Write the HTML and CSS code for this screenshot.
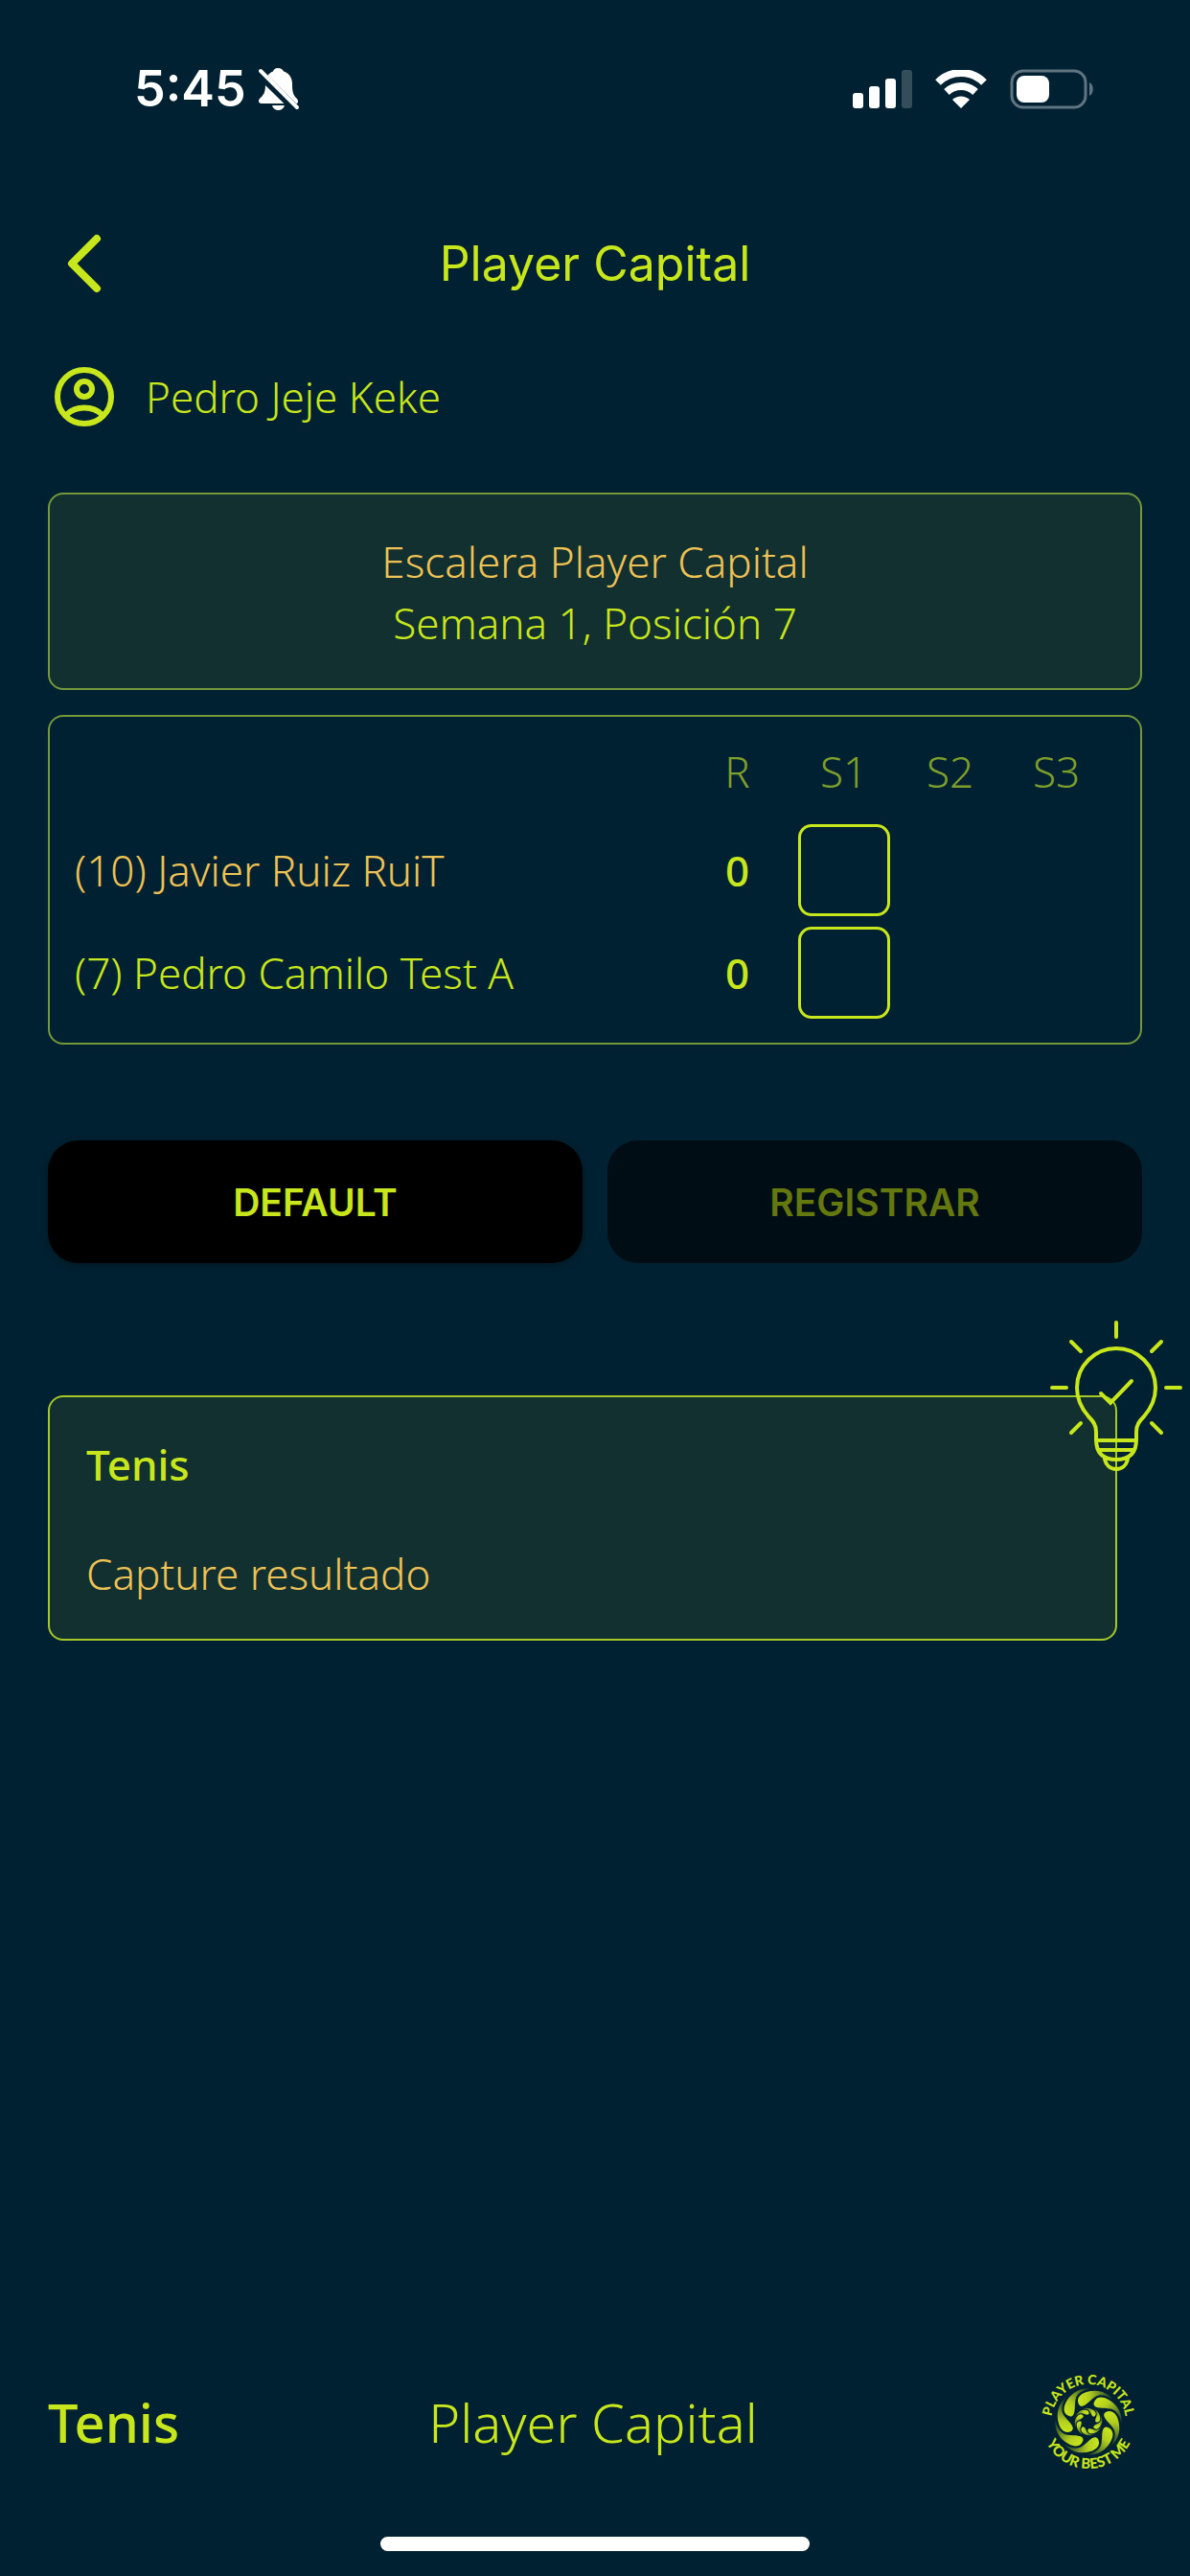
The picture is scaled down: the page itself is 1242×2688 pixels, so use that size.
FILE: index.html
```html
<!DOCTYPE html>
<html lang="es">
<head>
    <meta charset="UTF-8">
    <meta name="viewport" content="width=device-width, initial-scale=1.0">
    <title>Player Capital - Capture resultado</title>
    <link rel="stylesheet" href="styles.css">
</head>
<body>
    <div class="status-bar">
        <div class="status-time">
            <span>5:45</span>
            <svg width="44" height="46" viewBox="0 0 44 46" fill="#fff">
                <path d="M21 1c3 0 5 1.500 6 3.500 6 2 9 6.500 9 13.500 0 10 2 12 5 15 2 3 1 5-1 5H4c-3 0-4-3-2-5 4-4 6-6 6-15 0-7 3-11.500 8-13.500C16.500 2.500 18.500 1 21 1z"/>
                <path d="M15 40h13c-1 3.500-3.500 5-6.500 5S16 43.500 15 40z"/>
                <path d="M-1 4l42 41" stroke="#002131" stroke-width="9"/>
                <path d="M3 4l38 38" stroke="#fff" stroke-width="4" stroke-linecap="round"/>
            </svg>
        </div>
        <div class="status-icons">
            <svg width="62" height="40" viewBox="0 0 62 40" fill="#fff">
                <rect x="0" y="24" width="11" height="16" rx="3"/>
                <rect x="17" y="17" width="11" height="23" rx="3"/>
                <rect x="34" y="9" width="11" height="31" rx="3"/>
                <rect x="51" y="0" width="11" height="40" rx="3" opacity=".2"/>
            </svg>
            <svg width="54" height="40" viewBox="0 0 54 40" fill="none" stroke="#fff">
                <path d="M3 13a34 34 0 0 1 48 0" stroke-width="8"/>
                <path d="M12 23a22 22 0 0 1 30 0" stroke-width="8"/>
                <path d="M18 31a13 13 0 0 1 18 0l-9 9z" fill="#fff" stroke="none"/>
            </svg>
            <svg width="88" height="42" viewBox="0 0 88 42">
                <rect x="2" y="2" width="77" height="38" rx="12" fill="none" stroke="#5f7480" stroke-width="3"/>
                <rect x="7" y="7" width="34" height="28" rx="8" fill="#fff"/>
                <path d="M83 14c5 2 5 12 0 14z" fill="#5f7480"/>
            </svg>
        </div>
    </div>

    <header class="header">
        <button class="back" type="button" aria-label="Volver">
            <svg width="36" height="62" viewBox="0 0 36 62" fill="none" stroke="#c8e61c" stroke-width="8" stroke-linecap="round" stroke-linejoin="round">
                <path d="M31 5L5 31l26 26"/>
            </svg>
        </button>
        <h1>Player Capital</h1>
    </header>

    <main class="content">
        <div class="user">
            <svg width="64" height="64" viewBox="0 0 64 64" fill="none" stroke="#c8e61c" stroke-width="6">
                <circle cx="32" cy="32" r="28"/>
                <circle cx="32" cy="24" r="8"/>
                <path d="M13 51c10-10 28-10 38 0"/>
            </svg>
            <span>Pedro Jeje Keke</span>
        </div>

        <section class="card match">
            <p class="orange">Escalera Player Capital</p>
            <p>Semana 1, Posición 7</p>
        </section>

        <section class="card score">
            <table>
                <thead>
                    <tr>
                        <td></td>
                        <th>R</th>
                        <th>S1</th>
                        <th>S2</th>
                        <th>S3</th>
                    </tr>
                </thead>
                <tbody>
                    <tr>
                        <td class="name orange"><label for="set1-a">(10) Javier Ruiz RuiT</label></td>
                        <td class="result">0</td>
                        <td><input id="set1-a" type="text" inputmode="numeric"></td>
                        <td></td>
                        <td></td>
                    </tr>
                    <tr>
                        <td class="name"><label for="set1-b">(7) Pedro Camilo Test A</label></td>
                        <td class="result">0</td>
                        <td><input id="set1-b" type="text" inputmode="numeric"></td>
                        <td></td>
                        <td></td>
                    </tr>
                </tbody>
            </table>
        </section>

        <div class="actions">
            <button type="button">DEFAULT</button>
            <button type="button" disabled>REGISTRAR</button>
        </div>

        <section class="card tip">
            <h2>Tenis</h2>
            <p class="orange">Capture resultado</p>
            <svg class="bulb" width="138" height="158" viewBox="0 0 138 158" fill="none" stroke="#c8e61c" stroke-width="4" stroke-linecap="round">
                <!-- rays -->
                <path d="M69 2v15M22 22l10 10M116 22l-10 10M2 70h15M121 70h15M22 117l10-10M116 117l-10-10"/>
                <!-- glass -->
                <path d="M48 124v-8c0-7-3-11-8-16-7-8-12-18-12-30a41 41 0 0 1 82 0c0 12-5 22-12 30-5 5-8 9-8 16v8"/>
                <!-- base -->
                <path d="M48 125h42M48 124c0 15 8 21 21 21s21-6 21-21M51 135h36M57 144c1 7 6 11 12 11s11-4 12-11"/>
                <path d="M53 76l10 10 22-23"/>
            </svg>
        </section>
    </main>

    <footer class="footer">
        <strong>Tenis</strong>
        <span>Player Capital</span>
        <svg class="logo" width="104" height="104" viewBox="-52 -52 104 104">
            <defs>
                <linearGradient id="fade" x1="0" y1="0" x2="1" y2="0">
                    <stop offset="0" stop-color="#c8e61c"/>
                    <stop offset=".3" stop-color="#b4d01e"/>
                    <stop offset="1" stop-color="#c8e61c" stop-opacity="0"/>
                </linearGradient>
                <path id="drop" fill="url(#fade)" d="M-10-18c-3-6 1-11 8-13C8-34 19-32 27-22c-8-6-15-7-20-4-6 4-13 14-17 8z"/>
                <g id="swirl">
                    <use href="#drop"/>
                    <use href="#drop" transform="rotate(45)"/>
                    <use href="#drop" transform="rotate(90)"/>
                    <use href="#drop" transform="rotate(135)"/>
                    <use href="#drop" transform="rotate(180)"/>
                    <use href="#drop" transform="rotate(225)"/>
                    <use href="#drop" transform="rotate(270)"/>
                    <use href="#drop" transform="rotate(315)"/>
                </g>
                <path id="arc-top" d="M-39 0a39 39 0 0 1 78 0"/>
                <path id="arc-bottom" d="M-49 0a49 49 0 0 0 98 0"/>
            </defs>
            <use href="#swirl"/>
            <use href="#swirl" transform="rotate(20) scale(-.42 .42)"/>
            <text><textPath href="#arc-top" startOffset="50%">PLAYER CAPITAL</textPath></text>
            <text class="motto"><textPath href="#arc-bottom" startOffset="50%">YOUR BEST ME</textPath></text>
        </svg>
    </footer>
    <div class="home-indicator"></div>
</body>
</html>
```
FILE: styles.css
```css
* {
    box-sizing: border-box;
}
body {
    margin: 0;
    min-height: 100vh;
    display: flex;
    flex-direction: column;
    background: #002131;
    color: #c8e61c;
    font-family: "Noto Sans", "Open Sans", sans-serif;
    font-size: 44px;
    font-weight: 300;
    line-height: 64px;
}
h1, h2, p {
    margin: 0;
}
svg {
    display: block;
    flex: none;
}
.orange {
    color: #eec254;
}
.status-bar {
    display: flex;
    justify-content: space-between;
    align-items: center;
    height: 186px;
    padding: 0 100px 0 140px;
    color: #fff;
    font-family: Inter, sans-serif;
    font-size: 52px;
    font-weight: 600;
}
.status-time {
    display: flex;
    align-items: center;
    gap: 12px;
}
.status-icons {
    display: flex;
    align-items: center;
    gap: 24px;
}
.header {
    display: grid;
    grid-template-columns: 1fr auto 1fr;
    align-items: center;
    height: 178px;
    padding: 0 50px;
}
.header h1 {
    font-family: Inter, sans-serif;
    font-size: 50px;
    font-weight: 400;
}
.back {
    justify-self: start;
    padding: 20px;
    border: 0;
    background: none;
}
.content {
    flex: 1;
    padding: 0 50px;
}
.user {
    display: flex;
    align-items: center;
    gap: 32px;
    height: 100px;
    padding-left: 6px;
}
.card {
    border: 2px solid #75993a;
    border-radius: 16px;
}
.match {
    margin-top: 50px;
    padding: 38px 24px 36px;
    background: #12302f;
    text-align: center;
}
.score {
    margin-top: 26px;
    padding: 8px 32px 20px 26px;
}
.score table {
    width: 100%;
    border-collapse: collapse;
    table-layout: fixed;
}
.score th {
    width: 111px;
    height: 98px;
    padding: 0;
    color: #7d9e2a;
    font-weight: 300;
}
.score tbody td {
    height: 107px;
    padding: 0;
    text-align: center;
}
.score tbody .name {
    text-align: left;
}
.score .result {
    font-weight: 500;
}
.score input {
    display: block;
    width: 96px;
    height: 96px;
    margin: 0 auto;
    border: 3px solid #c8e61c;
    border-radius: 14px;
    background: none;
    color: inherit;
    font: inherit;
    text-align: center;
}
.actions {
    display: flex;
    gap: 26px;
    margin-top: 100px;
}
.actions button {
    flex: 1;
    height: 128px;
    border: 0;
    border-radius: 32px;
    background: #000;
    box-shadow: 0 2px 6px rgba(0, 0, 0, 0.3);
    color: #c8e61c;
    font-family: Inter, sans-serif;
    font-size: 39px;
    font-weight: 600;
}
.actions button:disabled {
    background: #000d14;
    box-shadow: none;
    color: #64780f;
}
.tip {
    position: relative;
    margin: 138px 26px 0 0;
    padding: 38px 38px 36px;
    border-color: #a5c828;
    background: #12302f;
}
.tip h2 {
    margin-bottom: 50px;
    font-size: 44px;
    font-weight: 500;
}
.bulb {
    position: absolute;
    top: -80px;
    right: -70px;
}
.footer {
    display: grid;
    grid-template-columns: 1fr auto 1fr;
    align-items: center;
    height: 120px;
    padding: 0 54px 0 50px;
    font-size: 56px;
}
.footer strong {
    font-weight: 500;
}
.logo {
    justify-self: end;
}
.logo text {
    fill: #c8e61c;
    font-family: Lato, sans-serif;
    font-size: 14px;
    font-weight: 900;
    text-anchor: middle;
}
.logo .motto {
    font-size: 15px;
}
.home-indicator {
    width: 36%;
    height: 15px;
    margin: 60px auto 26px;
    border-radius: 8px;
    background: #fff;
}
```
